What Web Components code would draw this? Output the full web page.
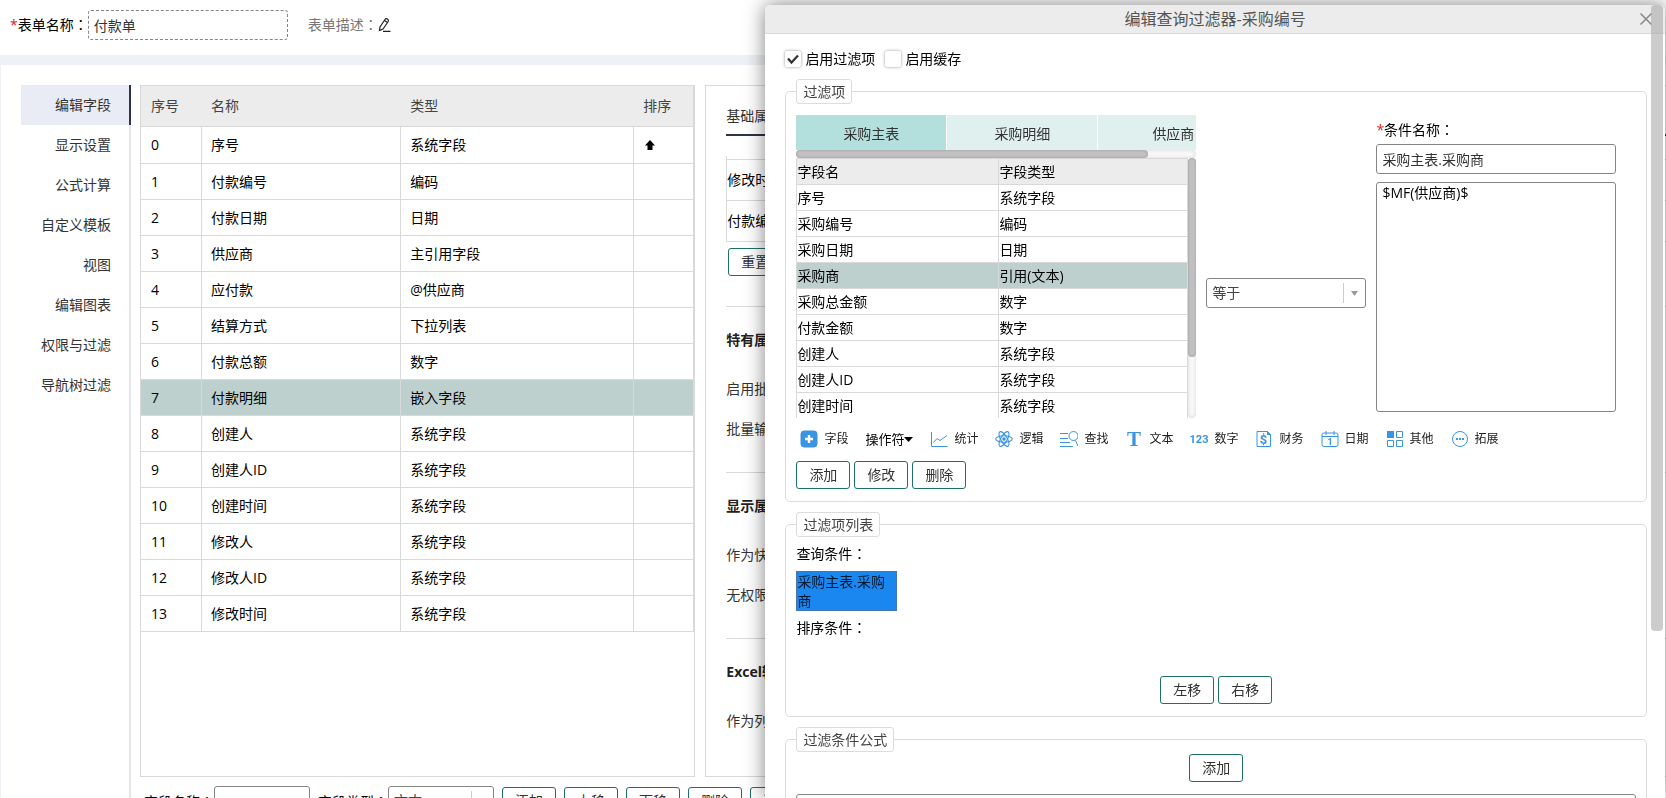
<!DOCTYPE html>
<html lang="zh-CN">
<head>
<meta charset="utf-8">
<title>付款单</title>
<style>
    html, body {
        margin: 0;
        height: 100%;
    }
    body {
        overflow: hidden;
        background: #eff1f6;
        color: #000;
        font: 14px/20px "Open Sans", "Noto Sans CJK SC", sans-serif;
        --line: #d9d9d9;
        --head: #ececec;
        --picked: #bed0ce;
        --brand: #1f7067;
        --edge: #858585;
        --blue: #3a94e0;
    }
</style>
</head>
<body>
<form-editor></form-editor>
<filter-dialog></filter-dialog>

<script>
// 居中的全角冒号
const COLON = '<span class="colon" lang="zh-TW">：</span>';

// 公共基类：把 html() 的内容放进 shadow root
class BaseElement extends HTMLElement {
    constructor() {
        super();
        this.attachShadow({mode: 'open'});
    }
    connectedCallback() {
        let templete = document.createElement('template');
        templete.innerHTML = `<style>
            * { box-sizing: border-box; }
            input, select, textarea, button { font: inherit; margin: 0; outline: none; }
            .colon { font-family: "Noto Sans CJK TC", sans-serif; }
            .star { color: #e02020; }
        </style>` + this.html();
        this.shadowRoot.replaceChildren(templete.content.cloneNode(true));
    }
    attr(name) {
        return this.getAttribute(name) || '';
    }
}

// 按钮
class UiButton extends BaseElement {
    html() {
        return `<style>
            :host { display: inline-block; flex: none; }
            button {
                display: block;
                height: 28px;
                padding: 0 12px;
                border: 1px solid var(--brand);
                border-radius: 3px;
                background: #fff;
                color: #333;
                line-height: 26px;
                white-space: nowrap;
            }
        </style>
        <button type="button"><slot></slot></button>`;
    }
}

// 勾选框
class UiCheck extends BaseElement {
    html() {
        return `<style>
            :host { display: block; }
            label { display: flex; align-items: center; gap: 4px; }
            input {
                appearance: none;
                width: 16px;
                height: 16px;
                border-radius: 2px;
                background: #fff;
                box-shadow: 0 0 3px rgba(0, 0, 0, .45);
            }
            .box { display: grid; }
            .box > * { grid-area: 1 / 1; }
            svg { display: none; pointer-events: none; }
            input:checked + svg { display: block; }
        </style>
        <label>
            <span class="box">
                <input type="checkbox" ${this.hasAttribute('checked') ? 'checked' : ''}>
                <svg width="16" height="16" viewBox="0 0 16 16"><path d="M3 7.5L6.5 11.5L13 4.5" fill="none" stroke="#333" stroke-width="2.2"/></svg>
            </span>
            <slot></slot>
        </label>`;
    }
}

// 带标签的文本框，layout="row" 时标签在左边
class UiInput extends BaseElement {
    html() {
        return `<style>
            :host { display: block; }
            :host([layout=row]) { display: flex; align-items: center; }
            label { display: block; line-height: 29px; white-space: nowrap; }
            input {
                display: block;
                width: 100%;
                height: 30px;
                padding: 0 5px;
                border: 1px solid var(--edge);
                border-radius: 3px;
                background: #fff;
                color: #333;
            }
            :host([layout=row]) input { width: var(--input-width); }
            :host([dashed]) input { border-style: dashed; }
        </style>
        <label for="input">${this.hasAttribute('required') ? '<span class="star">*</span>' : ''}${this.attr('label')}${COLON}</label>
        <input id="input" type="text" value="${this.attr('value')}">`;
    }
}

// 下拉框
class UiSelect extends BaseElement {
    html() {
        let label = this.attr('label');
        return `<style>
            :host { display: flex; align-items: center; }
            label { white-space: nowrap; }
            .wrap { display: grid; flex: 1; min-width: var(--select-width, 0); align-items: center; }
            .wrap > * { grid-area: 1 / 1; }
            select {
                appearance: none;
                width: 100%;
                height: 30px;
                padding: 0 5px;
                border: 1px solid var(--edge);
                border-radius: 3px;
                background: #fff;
                color: #444;
            }
            svg { justify-self: end; pointer-events: none; }
        </style>
        ${label ? `<label for="select">${label}${COLON}</label>` : ''}
        <div class="wrap">
            <select id="select" ${label ? '' : 'aria-label="比较方式"'}><option>${this.attr('value')}</option></select>
            <svg width="24" height="20" viewBox="0 0 24 20"><path d="M1.5 0V20" stroke="#ccc"/><path d="M9 8h7l-3.500 5z" fill="#999"/></svg>
        </div>`;
    }
}

// 顶部
class FormHeader extends BaseElement {
    html() {
        return `<style>
            :host {
                display: flex;
                align-items: center;
                gap: 20px;
                height: 55px;
                padding: 0 10px 6px;
                box-sizing: border-box;
                background: #fff;
            }
            ui-input { --input-width: 200px; }
            .desc { display: flex; align-items: center; color: #777; }
            button { display: flex; padding: 0; border: 0; background: none; }
        </style>
        <ui-input layout="row" dashed required label="表单名称" value="付款单"></ui-input>
        <div class="desc">
            <span>表单描述${COLON}</span>
            <button type="button" aria-label="编辑表单描述">
                <svg width="14" height="16" viewBox="1 0 14 16" fill="none" stroke="#222" stroke-width="1.2"><path d="M2.500 13.500L3 10L8 2.500Q9 1 10.500 2Q12 3 11.200 4.500L6 12zM7.500 3.500L10.500 5.500M6 14.300H13.500"/></svg>
            </button>
        </div>`;
    }
}

// 左侧菜单
class SideMenu extends BaseElement {
    html() {
        let items = ['编辑字段', '显示设置', '公式计算', '自定义模板', '视图', '编辑图表', '权限与过滤', '导航树过滤'];
        return `<style>
            :host {
                display: block;
                width: 110px;
                box-shadow: inset -2px 0 #e4e6ea;
            }
            a {
                display: block;
                padding-right: 18px;
                border-right: 2px solid transparent;
                color: #333;
                line-height: 40px;
                text-align: right;
                text-decoration: none;
            }
            a.active { background: #e9ecf5; border-color: #2f334a; }
        </style>
        <nav>${items.map((t, i) => `<a href="#" class="${i ? '' : 'active'}">${t}</a>`).join('')}</nav>`;
    }
}

// 字段表
class FieldTable extends BaseElement {
    html() {
        let rows = [
            ['序号', '系统字段'], ['付款编号', '编码'], ['付款日期', '日期'], ['供应商', '主引用字段'],
            ['应付款', '@供应商'], ['结算方式', '下拉列表'], ['付款总额', '数字'], ['付款明细', '嵌入字段'],
            ['创建人', '系统字段'], ['创建人ID', '系统字段'], ['创建时间', '系统字段'],
            ['修改人', '系统字段'], ['修改人ID', '系统字段'], ['修改时间', '系统字段']
        ];
        let up = '<svg width="14" height="12" viewBox="0 0 14 12"><path d="M7 1L12 6.500H9.500V11H4.500V6.500H2z"/></svg>';
        return `<style>
            :host {
                display: block;
                height: calc(100vh - 106px);
                box-sizing: border-box;
                border: 1px solid var(--line);
                overflow: hidden;
            }
            table { width: 100%; border-spacing: 0; table-layout: fixed; }
            th, td {
                height: 36px;
                padding: 0 9px;
                border: 0 solid var(--line);
                border-width: 0 1px 1px 0;
                text-align: left;
                font-weight: 400;
            }
            th { height: 41px; border-right: 0; background: var(--head); color: #444; }
            th:last-child { border-right: 1px solid var(--line); }
            th:first-child, td:first-child { padding-left: 10px; }
            tbody tr:first-child td { height: 37px; }
            .picked { background: var(--picked); }
            svg { display: block; }
            .no { width: 61px; }
            .name { width: 36%; }
            .sort { width: 60px; }
        </style>
        <table>
            <thead><tr><th class="no">序号</th><th class="name">名称</th><th>类型</th><th class="sort">排序</th></tr></thead>
            <tbody>${rows.map((r, i) => `<tr class="${i == 7 ? 'picked' : ''}"><td>${i}</td><td>${r[0]}</td><td>${r[1]}</td><td>${i ? '' : up}</td></tr>`).join('')}</tbody>
        </table>`;
    }
}

// 表格下面的一行操作
class FieldBar extends BaseElement {
    html() {
        return `<style>
            :host { display: flex; align-items: center; gap: 8px; padding-left: 4px; white-space: nowrap; }
            ui-input { --input-width: 96px; }
            ui-select { --select-width: 106px; }
        </style>
        <ui-input layout="row" label="字段名称"></ui-input>
        <ui-select label="字段类型" value="文本"></ui-select>
        <ui-button>添加</ui-button><ui-button>上移</ui-button><ui-button>下移</ui-button><ui-button>删除</ui-button><ui-button>清空</ui-button>`;
    }
}

// 属性面板
class AttrPanel extends BaseElement {
    html() {
        let groups = [
            ['特有属性', '启用批量', '批量输入'],
            ['显示属性', '作为快捷', '无权限时'],
            ['Excel输出', '作为列']
        ];
        return `<style>
            :host {
                display: block;
                height: calc(100vh - 106px);
                box-sizing: border-box;
                padding-left: 20px;
                border: 1px solid var(--line);
                border-right: 0;
                color: #333;
                overflow: hidden;
            }
            .tab { padding-top: 12px; border-bottom: 2px solid #2f334a; line-height: 36px; }
            ul { margin: 20px 0 6px; padding: 3px 0 0; border-left: 1px solid var(--line); list-style: none; color: #000; }
            li { border-top: 1px solid var(--line); line-height: 40px; }
            li:last-child { border-bottom: 1px solid var(--line); }
            ui-button { margin: 0 0 30px 2px; display: block; }
            section { padding: 23px 0; border-top: 1px solid var(--line); }
            h4 { margin: 0 0 19px; font-size: 14px; line-height: 20px; color: #222; }
            p { margin: 0; line-height: 40px; }
        </style>
        <div class="tab">基础属性</div>
        <ul><li>修改时间</li><li>付款编号</li></ul>
        <ui-button>重置</ui-button>
        ${groups.map(([title, ...list]) => `<section><h4>${title}</h4>${list.map(t => `<p>${t}</p>`).join('')}</section>`).join('')}`;
    }
}

class FormEditor extends BaseElement {
    html() {
        return `<style>
            :host { display: block; height: 100vh; overflow: hidden; }
            main {
                display: grid;
                grid-template-columns: 110px calc(100vw / 3) 1fr;
                min-height: 100vh;
                margin: 10px 0 0 1px;
                padding: 20px 0 0 20px;
                box-sizing: border-box;
                background: #fff;
            }
            .center { margin-left: 9px; margin-right: -9px; }
            field-bar { margin-top: 9px; }
            attr-panel { margin-left: 19px; }
        </style>
        <form-header></form-header>
        <main>
            <side-menu></side-menu>
            <div class="center">
                <field-table></field-table>
                <field-bar></field-bar>
            </div>
            <attr-panel></attr-panel>
        </main>`;
    }
}

// 带标题的分组框
class BoxGroup extends BaseElement {
    html() {
        return `<style>
            :host { display: block; }
            fieldset {
                min-width: 0;
                margin: 0;
                padding: 0 10px 12px;
                border: 1px solid #dcdcdc;
                border-radius: 5px;
            }
            legend {
                padding: 0 6px;
                border: 1px solid #dcdcdc;
                border-radius: 3px;
                color: #444;
                line-height: 23px;
            }
        </style>
        <fieldset><legend>${this.attr('title-text')}</legend><slot></slot></fieldset>`;
    }
}

// 可选字段：表页签 + 字段列表
class SourceFields extends BaseElement {
    html() {
        let rows = [
            ['序号', '系统字段'], ['采购编号', '编码'], ['采购日期', '日期'], ['采购商', '引用(文本)'],
            ['采购总金额', '数字'], ['付款金额', '数字'], ['创建人', '系统字段'],
            ['创建人ID', '系统字段'], ['创建时间', '系统字段']
        ];
        return `<style>
            :host { display: block; min-width: 0; }
            .tabs { display: flex; gap: 1px; overflow: hidden; }
            .tabs button {
                flex: none;
                width: 150px;
                height: 35px;
                padding: 3px 0 0;
                border: 0;
                background: #e0f0ee;
                color: #333;
            }
            .tabs .active { background: #b3dfdd; }
            .track { border-radius: 4px; background: #fafafa; box-shadow: inset 0 0 4px rgba(0, 0, 0, .15); }
            .thumb { border-radius: 4px; background: #c1c1c1; box-shadow: inset 0 0 3px rgba(0, 0, 0, .2); }
            .across { height: 8px; }
            .across .thumb { width: 88%; height: 8px; }
            .list { display: grid; grid-template-columns: 1fr 8px; height: 260px; overflow: hidden; }
            .down .thumb { height: 199px; }
            table { width: 100%; border-spacing: 0; border-left: 1px solid var(--line); table-layout: fixed; }
            th, td {
                height: 26px;
                padding: 0;
                border: 0 solid var(--line);
                border-width: 0 1px 1px 0;
                text-align: left;
                font-weight: 400;
            }
            th { height: 27px; border-top-width: 1px; background: var(--head); }
            th:first-child { width: 202px; }
            .scroll { overflow: hidden; }
            .picked { background: var(--picked); }
        </style>
        <div class="tabs"><button type="button" class="active">采购主表</button><button type="button">采购明细</button><button type="button">供应商</button></div>
        <div class="track across"><div class="thumb"></div></div>
        <div class="list">
            <div class="scroll">
                <table>
                    <thead><tr><th>字段名</th><th>字段类型</th></tr></thead>
                    <tbody>${rows.map(r => `<tr class="${r[0] == '采购商' ? 'picked' : ''}"><td>${r[0]}</td><td>${r[1]}</td></tr>`).join('')}</tbody>
                </table>
            </div>
            <div class="track down"><div class="thumb"></div></div>
        </div>`;
    }
}

// 公式工具栏
class FormulaTools extends BaseElement {
    html() {
        let icons = {
            '字段': '<rect x="1" y="1" width="16" height="16" rx="3" fill="#3a94e0"/><path d="M9 5V13M5 9H13" stroke="#fff" stroke-width="2.400"/>',
            '统计': '<path d="M1.500 2V16.500H17.500M3.500 12.500L7 8.500L10 10.500L17 5.500"/>',
            '逻辑': '<g stroke-width="1.100"><ellipse cx="9" cy="9" rx="8.300" ry="3.200"/><ellipse cx="9" cy="9" rx="8.300" ry="3.200" transform="rotate(60 9 9)"/><ellipse cx="9" cy="9" rx="8.300" ry="3.200" transform="rotate(120 9 9)"/></g><circle cx="9" cy="9" r="1.800" fill="#3a94e0" stroke="none"/>',
            '查找': '<path d="M0 3.500H8M0 8.500H8M0 12.500H10M0 16.500H13M15.500 10.500L18 16"/><circle cx="13.500" cy="6" r="4.500"/>',
            '文本': '<text x="9" y="16" font-family="Liberation Serif" font-size="21" font-weight="700">T</text>',
            '数字': '<text x="9" y="13" font-family="Roboto" font-size="11" font-weight="700">123</text>',
            '财务': '<path d="M2 1.500H12.500L15.500 4.500V16.500H2z"/><path d="M12 1V5H16z" fill="#3a94e0" stroke="none"/><text x="8.500" y="14" font-family="Roboto" font-size="13" font-weight="700">$</text>',
            '日期': '<rect x="1" y="3" width="16" height="13.500" rx="2"/><path d="M1 6.500H17M5 1V5M13 1V5"/><text x="9" y="15" font-family="Roboto" font-size="9" font-weight="700">1</text>',
            '其他': '<path d="M1 1H8V8H1z" fill="#3a94e0" stroke="none"/><path d="M10.500 1.500H16.500V7.500H10.500zM1.500 10.500H7.500V16.500H1.500zM10.500 10.500H16.500V16.500H10.500z"/>',
            '拓展': '<circle cx="9" cy="9" r="7.500"/><path d="M5 9H7M8 9H10M11 9H13" stroke-width="1.800"/>'
        };
        let item = name => `<button type="button"><svg width="18" height="18" viewBox="0 0 18 18">${icons[name]}</svg>${name}</button>`;
        let [first, ...rest] = Object.keys(icons);
        return `<style>
            :host { display: flex; align-items: center; gap: 17px; height: 42px; padding: 0 4px; margin-bottom: 1px; }
            button {
                display: flex;
                flex: none;
                align-items: center;
                gap: 6px;
                padding: 0;
                border: 0;
                background: none;
                color: #222;
                font-size: 12px;
                line-height: 20px;
            }
            button.op { gap: 0; font-size: 13px; color: #000; }
            svg { fill: none; stroke: var(--blue); }
            text { fill: var(--blue); stroke: none; text-anchor: middle; }
            .op svg { fill: #000; stroke: none; }
        </style>
        ${item(first)}
        <button type="button" class="op">操作符<svg width="9" height="6" viewBox="0 0 9 6"><path d="M0 1H9L4.500 6z"/></svg></button>
        ${rest.map(item).join('')}`;
    }
}

// 条件名称与取值
class ConditionValue extends BaseElement {
    html() {
        return `<style>
            :host { display: block; }
            textarea {
                display: block;
                width: 100%;
                height: 230px;
                margin-top: 8px;
                padding: 0 5px;
                border: 1px solid var(--edge);
                border-radius: 3px;
                resize: none;
                line-height: 20px;
            }
        </style>
        <ui-input required label="条件名称" value="采购主表.采购商"></ui-input>
        <textarea aria-label="条件值">$MF(供应商)$</textarea>`;
    }
}

class FilterDialog extends BaseElement {
    html() {
        return `<style>
            :host {
                display: block;
                position: fixed;
                top: 5px;
                right: 1px;
                bottom: 0;
                width: 54vw;
                border-radius: 5px 5px 0 0;
                background: #fff;
                box-shadow: 0 0 20px rgba(0, 0, 0, .5);
            }
            header {
                display: grid;
                height: 29px;
                border-bottom: 1px solid var(--line);
                border-radius: 5px 5px 0 0;
                background: var(--head);
                align-items: center;
            }
            header > * { grid-area: 1 / 1; }
            h3 { margin: 0; color: #555; font-size: 16px; font-weight: 400; line-height: 28px; text-align: center; }
            .close { display: flex; justify-self: end; margin-right: 12px; padding: 0; border: 0; background: none; }
            .body {
                display: flex;
                flex-direction: column;
                gap: 10px;
                height: calc(100% - 29px);
                box-sizing: border-box;
                padding: 15px 18px 0 20px;
                overflow: hidden;
            }
            .body > * { flex: none; }
            .checks, .row { display: flex; gap: 10px; }
            .row { gap: 4px; }
            .middle { justify-content: center; }
            .editor { display: grid; grid-template-columns: 400px 160px 240px; gap: 10px; padding-top: 11px; }
            .editor ui-select { align-self: start; margin-top: 163px; }
            .caption { margin: 6px 0 7px; }
            .chip {
                display: block;
                width: 101px;
                padding: 0;
                border: 1px solid #4577a8;
                background: #1a86f0;
                color: #001a33;
                line-height: 19px;
                text-align: left;
            }
            .move { margin-top: 38px; }
            .add { margin: 2px 0 12px; }
            .formula { display: block; width: 100%; height: 100px; border: 1px solid var(--edge); border-radius: 3px; resize: none; }
            .bar {
                position: absolute;
                top: 0;
                right: 2px;
                width: 12px;
                height: 79%;
                border-radius: 4px;
                background: rgba(170, 170, 170, .6);
            }
        </style>
        <header>
            <h3>编辑查询过滤器-采购编号</h3>
            <button class="close" type="button" aria-label="关闭"><svg width="14" height="14" viewBox="0 0 14 14" stroke="#888" stroke-width="1.500"><path d="M1.500 1.500L12.500 12.500M12.500 1.500L1.500 12.500"/></svg></button>
        </header>
        <div class="body">
            <div class="checks"><ui-check checked>启用过滤项</ui-check><ui-check>启用缓存</ui-check></div>
            <box-group title-text="过滤项">
                <div class="editor">
                    <source-fields></source-fields>
                    <ui-select value="等于"></ui-select>
                    <condition-value></condition-value>
                </div>
                <formula-tools></formula-tools>
                <div class="row"><ui-button>添加</ui-button><ui-button>修改</ui-button><ui-button>删除</ui-button></div>
            </box-group>
            <box-group title-text="过滤项列表">
                <div class="caption">查询条件${COLON}</div>
                <button class="chip" type="button">采购主表.采购商</button>
                <div class="caption">排序条件${COLON}</div>
                <div class="row middle move"><ui-button>左移</ui-button><ui-button>右移</ui-button></div>
            </box-group>
            <box-group title-text="过滤条件公式">
                <div class="row middle add"><ui-button>添加</ui-button></div>
                <textarea class="formula" aria-label="过滤条件公式"></textarea>
            </box-group>
        </div>
        <div class="bar"></div>`;
    }
}

customElements.define('ui-button', UiButton);
customElements.define('ui-check', UiCheck);
customElements.define('ui-input', UiInput);
customElements.define('ui-select', UiSelect);
customElements.define('form-header', FormHeader);
customElements.define('side-menu', SideMenu);
customElements.define('field-table', FieldTable);
customElements.define('field-bar', FieldBar);
customElements.define('attr-panel', AttrPanel);
customElements.define('form-editor', FormEditor);
customElements.define('box-group', BoxGroup);
customElements.define('source-fields', SourceFields);
customElements.define('formula-tools', FormulaTools);
customElements.define('condition-value', ConditionValue);
customElements.define('filter-dialog', FilterDialog);
</script>
</body>
</html>
